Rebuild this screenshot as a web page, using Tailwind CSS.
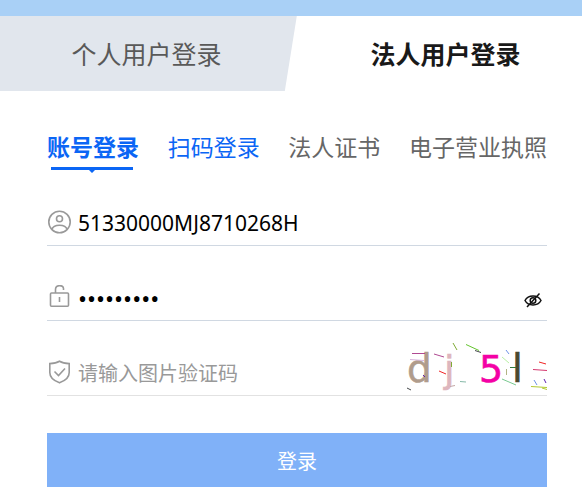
<!DOCTYPE html>
<html lang="zh-CN">
  <head>
    <meta charset="UTF-8" />
    <meta name="viewport" content="width=device-width, initial-scale=1.0" />
    <title>法人用户登录</title>
    <script src="https://cdn.jsdelivr.net/npm/@tailwindcss/browser@4"></script>
  </head>
  <body class="bg-white font-['Noto_Sans','Noto_Sans_CJK_SC',sans-serif]">
    <!-- Top bar -->
    <div class="h-4 bg-[#a9d0f6]"></div>

    <!-- User type -->
    <div class="flex h-[75px] text-[25px]">
      <button
        type="button"
        class="w-[51%] bg-[#e1e6ed] pt-[3px] pr-1 text-[#595959] [clip-path:polygon(0_0,100%_0,calc(100%-12px)_100%,0_100%)]"
      >
        个人用户登录
      </button>
      <button type="button" class="flex-1 pt-[3px] pl-3 font-bold text-[#191919]">
        法人用户登录
      </button>
    </div>

    <main class="pt-10 pr-[35px] pl-[47px]">
      <!-- Login methods -->
      <nav class="flex justify-between text-[23px] leading-8 whitespace-nowrap text-[#666]">
        <a href="#" class="relative font-bold text-[#0b66f5]">
          账号登录
          <svg class="absolute top-9 left-1 h-[6px] w-[82px]" viewBox="0 0 82 6" fill="currentColor">
            <path d="M0 0h82v3H44l-3 3l-3-3H0z" />
          </svg>
        </a>
        <a href="#" class="text-[#0b66f5]">扫码登录</a>
        <a href="#">法人证书</a>
        <a href="#">电子营业执照</a>
      </nav>

      <!-- Login form -->
      <form class="mt-9">
        <div class="flex h-[47px] items-center border-b border-[#d0d8e2]">
          <label for="account" aria-label="账号" class="w-[31px]">
            <svg class="size-6" viewBox="0 0 24 24" fill="none" stroke="#999" stroke-width="1.6">
              <circle cx="12.5" cy="12" r="10.7" />
              <circle cx="12.5" cy="8.7" r="3" />
              <path d="M5 19.500c.7-3 2.700-4.200 7.500-4.200s6.800 1.200 7.500 4.200" />
            </svg>
          </label>
          <input
            id="account"
            type="text"
            value="51330000MJ8710268H"
            class="min-w-0 flex-1 pt-1 text-[21px] text-black outline-none"
          />
        </div>

        <div class="mt-7 flex h-[47px] items-center border-b border-[#d0d8e2]">
          <label for="password" aria-label="密码" class="w-[31px]">
            <svg class="size-6" viewBox="0 0 24 24" fill="none" stroke="#999" stroke-width="1.6">
              <rect x="3.500" y="8" width="18" height="13.300" rx="1" />
              <path d="M8.500 8V4.500c0-5 8-5 8-1v1.500M12.500 12v5" />
            </svg>
          </label>
          <input
            id="password"
            type="password"
            value="123456789"
            class="min-w-0 flex-1 pt-1 text-[24px] text-black outline-none"
          />
          <button type="button" aria-label="显示密码" class="mr-1 pt-1">
            <svg class="size-5" viewBox="0 0 20 20" fill="none" stroke="#111" stroke-width="1.500">
              <path d="M2 11.500c3.200-6 12.800-6 16 0c-3.200 6-12.800 6-16 0z" />
              <circle cx="10" cy="11.500" r="2.800" />
              <path d="M4 18L16.500 4.500" />
            </svg>
          </button>
        </div>

        <div class="mt-7 flex h-[47px] items-center border-b border-[#e2e2e2]">
          <label for="captcha" aria-label="验证码" class="w-[31px]">
            <svg class="size-6" viewBox="0 0 24 24" fill="none" stroke="#999" stroke-width="1.600">
              <path d="M12.500 1.200c3 1.800 6 2.200 9.700 2.400v9c0 5-4.700 8.500-9.700 10.200c-5-1.700-9.700-5.200-9.700-10.200v-9c3.700-.2 6.700-.6 9.700-2.400z" />
              <path d="M7.500 11.500l4 4l6.500-7" />
            </svg>
          </label>
          <input
            id="captcha"
            type="text"
            placeholder="请输入图片验证码"
            class="min-w-0 flex-1 pt-1 text-[20px] text-black outline-none placeholder:text-[#999]"
          />
          <!-- Captcha -->
          <svg class="-mt-3 h-[54px] w-[147px]" viewBox="400 339 147 54" font-family="DejaVu Sans">
            <g stroke-width=".6">
              <text x="407" y="382" font-size="39" fill="#b09c8c" stroke="#b09c8c">d</text>
              <text x="444" y="382" font-size="38" fill="#deb6bd" stroke="#deb6bd">j</text>
              <text x="479" y="382" font-size="38" fill="#f400a5" stroke="#f400a5">5</text>
              <text x="512" y="382" font-size="39" fill="#4a4a2c" stroke="#4a4a2c">l</text>
            </g>
            <g fill="none" stroke-width="1">
              <path stroke="#b04a92" d="M412 353.500h13M434 354l10 3" />
              <path stroke="#d5b6dd" d="M410 359.500l14 1" />
              <path stroke="#7fab35" d="M453 343l4 7M451.500 362v5" />
              <path stroke="#65c52f" d="M466 344.500l13 6" />
              <path stroke="#44484a" d="M475 350.500l6 2M407 388l4 2" />
              <path stroke="#f02525" d="M439 371l7 3M539 362l7 2" />
              <path stroke="#5c1faf" d="M423 375l2 2M544 379l2 4" />
              <path stroke="#86b9a8" d="M460 381.500l6 .5" />
              <path stroke="#c3a6a6" d="M450 386.500l5-1" />
              <path stroke="#6d92e8" d="M506 350l3 4M534 380l3 5" />
              <path stroke="#b9f0a4" d="M502 357l7 6" />
              <path stroke="#b2b584" d="M506.500 369v6" />
              <path stroke="#31793b" d="M510 367.500h6" />
              <path stroke="#79c990" d="M502 379l14 6" />
              <path stroke="#d53a70" d="M533 369.500l14 1" />
              <path stroke="#b2c932" d="M531 386.500l16 1M542 388l5 1.500" />
            </g>
          </svg>
        </div>

        <button type="submit" class="mt-[37px] h-[54px] w-full bg-[#80b1f8] pt-[3px] text-[20px] text-white">
          登录
        </button>
      </form>
    </main>
  </body>
</html>
